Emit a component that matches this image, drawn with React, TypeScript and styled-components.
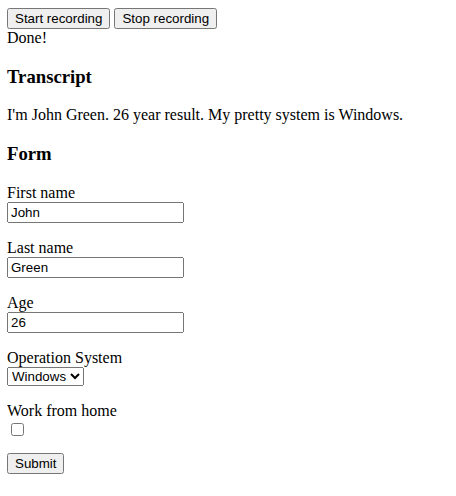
import React from "react";
import styled, { createGlobalStyle } from "styled-components";

const Global = createGlobalStyle`
  body {
    margin: 8px 8px 8px 7px;
    font-family: "Liberation Serif", "Times New Roman", serif;
    font-size: 16px;
    color: #000;
    background: #fff;
  }
  button, input, select {
    font-family: "Liberation Sans", Arial, sans-serif;
    font-size: 13.3333px;
  }
`;

const Toolbar = styled.div`
  display: flex;
  gap: 4px;
`;

const Heading = styled.h3`
  font-size: 18.72px;
  font-weight: bold;
  margin: 18.72px 0;
`;

const Paragraph = styled.p`
  margin: 16px 0;
`;

const Field = styled.div<{ $gap?: number }>`
  margin-bottom: ${(p) => p.$gap ?? 16}px;
`;

const Label = styled.label`
  display: block;
`;

const TextInput = styled.input`
  box-sizing: border-box;
  width: 177px;
`;

export default function App() {
  return (
    <>
      <Global />
      <Toolbar>
        <button>Start recording</button>
        <button>Stop recording</button>
      </Toolbar>
      <div>Done!</div>
      <Heading>Transcript</Heading>
      <Paragraph>I'm John Green. 26 year result. My pretty system is Windows.</Paragraph>
      <Heading>Form</Heading>
      <form onSubmit={(e) => e.preventDefault()}>
        <Field>
          <Label htmlFor="fn">First name</Label>
          <TextInput id="fn" defaultValue="John" />
        </Field>
        <Field>
          <Label htmlFor="ln">Last name</Label>
          <TextInput id="ln" defaultValue="Green" />
        </Field>
        <Field>
          <Label htmlFor="age">Age</Label>
          <TextInput id="age" defaultValue="26" />
        </Field>
        <Field>
          <Label htmlFor="os">Operation System</Label>
          <select id="os" defaultValue="Windows">
            <option>Windows</option>
            <option>macOS</option>
            <option>Linux</option>
          </select>
        </Field>
        <Field $gap={13}>
          <Label htmlFor="wfh">Work from home</Label>
          <input id="wfh" type="checkbox" />
        </Field>
        <button type="submit">Submit</button>
      </form>
    </>
  );
}
